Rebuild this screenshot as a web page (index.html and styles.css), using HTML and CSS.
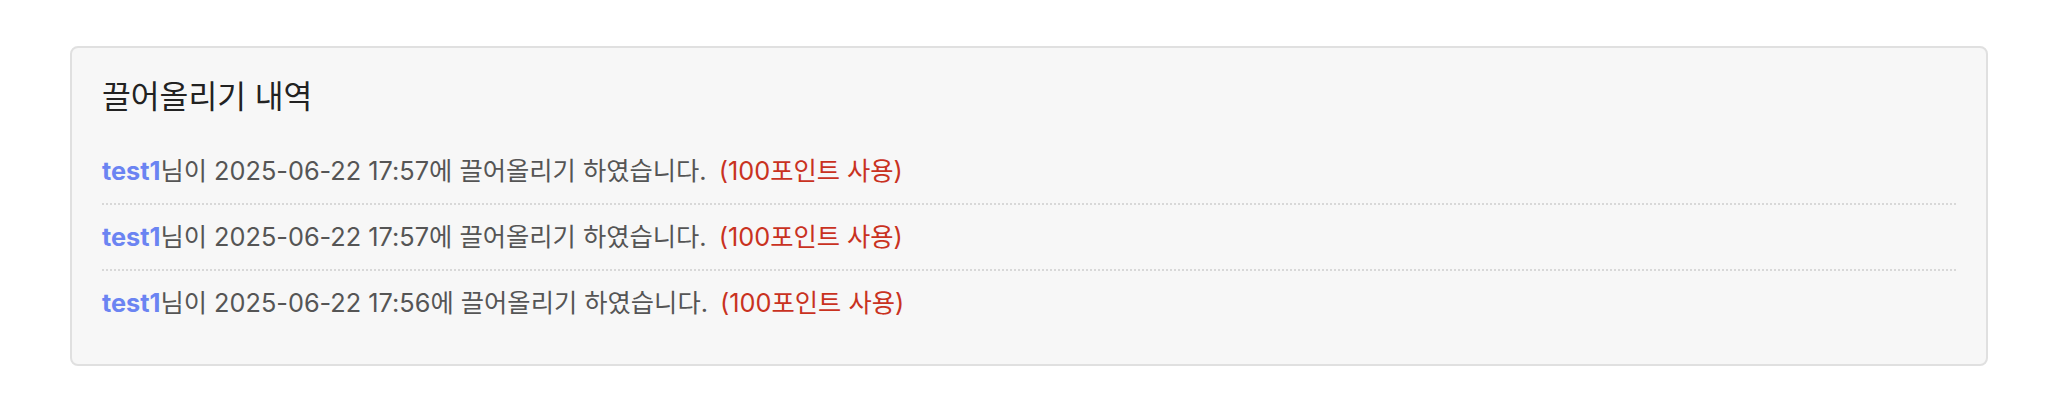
FILE: index.html
```html
<!DOCTYPE html>
<html lang="ko">
<head>
  <meta charset="UTF-8">
  <title>끌어올리기 내역</title>
  <link rel="stylesheet" href="styles.css">
</head>
<body>
  <div class="page">
    <div class="bump-box">
      <h2 class="bump-title">끌어올리기 내역</h2>
      <ul class="bump-list">
        <li><b class="user">test1</b>님이 2025-06-22 17:57에 끌어올리기 하였습니다. <span class="point">(100포인트 사용)</span></li>
        <li><b class="user">test1</b>님이 2025-06-22 17:57에 끌어올리기 하였습니다. <span class="point">(100포인트 사용)</span></li>
        <li><b class="user">test1</b>님이 2025-06-22 17:56에 끌어올리기 하였습니다. <span class="point">(100포인트 사용)</span></li>
      </ul>
    </div>
  </div>
</body>
</html>
```

FILE: styles.css
```css
/*
 *  Page
 */
body{
  margin: 0;
  background: #fff;
  font-family: Inter, "Noto Sans CJK KR", sans-serif;
  color: #555;
}
.page{
  padding: 46px 63px 0 70px;
}

/*
 *  Bump history box
 */
.bump-box{
  background: #f7f7f7;
  border: solid #e0e0e0 2px;
  border-radius: 8px;
  padding: 29px 30px 29px 30px;
}
.bump-title{
  margin: 0 0 22px 0;
  font-size: 31.3px;
  font-weight: normal;
  line-height: 40px;
  color: #222;
}
.bump-list{
  list-style: none;
  margin: 0;
  padding: 0;
}
.bump-list li{
  font-size: 25.3px;
  line-height: 38px;
  padding: 13px 0;
  border-bottom: dotted #d8d8d8 2px;
}
.bump-list li:last-child{
  border-bottom: none;
}
.user{
  color: #6b84f2;
  font-weight: bold;
}
.point{
  color: #c9321f;
  margin-left: 5px;
}
```
